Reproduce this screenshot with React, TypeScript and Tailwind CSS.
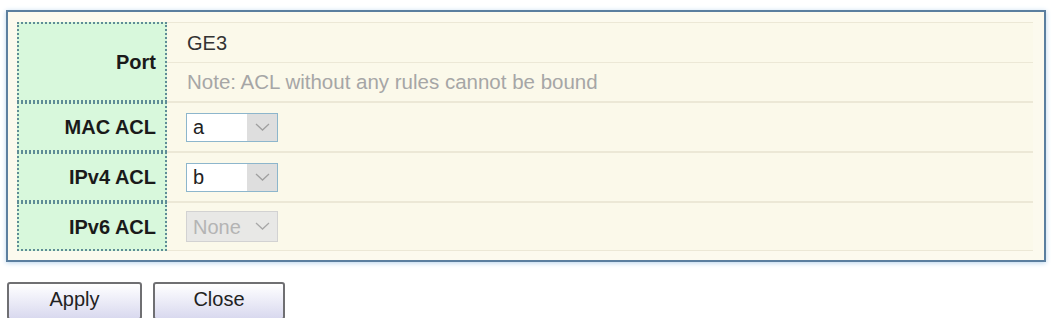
import { ReactNode } from "react";

const font = { fontFamily: '"Liberation Sans", Arial, sans-serif' };

function Chevron({ color }: { color: string }) {
  return (
    <svg width="15" height="9" viewBox="0 0 15 9" fill="none">
      <path d="M1 1l6.5 6L14 1" stroke={color} strokeWidth="1.3" />
    </svg>
  );
}

function Select({ value, disabled }: { value: string; disabled?: boolean }) {
  if (disabled) {
    return (
      <div className="flex h-[31px] w-[92px] items-center justify-between border border-[#d2d2d2] bg-[#e8e8e6] pl-[6px] pr-[7px] text-[20px] text-[#b4b4b4]">
        <span>{value}</span>
        <Chevron color="#a8a8a8" />
      </div>
    );
  }
  return (
    <div className="flex h-[29px] w-[92px] border border-[#8db6cc] bg-white text-[20px] text-[#222]">
      <div className="flex flex-1 items-center pl-[6px]">{value}</div>
      <div className="flex w-[30px] items-center justify-center bg-[#dedede]">
        <Chevron color="#a0a0a0" />
      </div>
    </div>
  );
}

function Row({ label, h, children }: { label: string; h: string; children: ReactNode }) {
  return (
    <div className={`flex ${h}`}>
      <div className="flex w-[150px] shrink-0 items-center justify-end border-2 border-dotted border-[#5f8c96] bg-[#d8f8dc] pr-[9px] text-[20px] font-bold text-[#1a1a1a]">
        {label}
      </div>
      <div className="flex flex-1 flex-col border-y border-[#ece8d6] bg-[#fbf9ea]">{children}</div>
    </div>
  );
}

export default function App() {
  return (
    <div className="min-h-[318px] overflow-hidden bg-white pl-[6px] pt-[10px]" style={font}>
      <div className="h-[252px] w-[1040px] border-2 border-[#5b7f9f] bg-[#fcfaee] pl-[9px] pr-[11px] pt-[10px] shadow-[0_1px_5px_#b8d4ec]">
        <Row label="Port" h="h-[80px]">
          <div className="flex h-[40px] items-center border-b border-[#ece8d6] pl-[20px] text-[20px] text-[#333]">
            GE3
          </div>
          <div className="flex flex-1 items-center pl-[20px] text-[20.5px] text-[#a6a6a6]">
            Note: ACL without any rules cannot be bound
          </div>
        </Row>
        <Row label="MAC ACL" h="h-[50px]">
          <div className="flex flex-1 items-center pl-[19px]">
            <Select value="a" />
          </div>
        </Row>
        <Row label="IPv4 ACL" h="h-[50px]">
          <div className="flex flex-1 items-center pl-[19px]">
            <Select value="b" />
          </div>
        </Row>
        <Row label="IPv6 ACL" h="h-[49px]">
          <div className="flex flex-1 items-center pl-[19px]">
            <Select value="None" disabled />
          </div>
        </Row>
      </div>
      <div className="mt-[20px] flex gap-[11px] pl-[1px]">
        <button className="h-[38px] w-[135px] rounded-[3px] border-2 border-[#6f6f72] bg-gradient-to-b from-white to-[#d9d9ef] pb-[4px] text-[20px] text-[#222]">
          Apply
        </button>
        <button className="h-[38px] w-[132px] rounded-[3px] border-2 border-[#6f6f72] bg-gradient-to-b from-white to-[#d9d9ef] pb-[4px] text-[20px] text-[#222]">
          Close
        </button>
      </div>
    </div>
  );
}
